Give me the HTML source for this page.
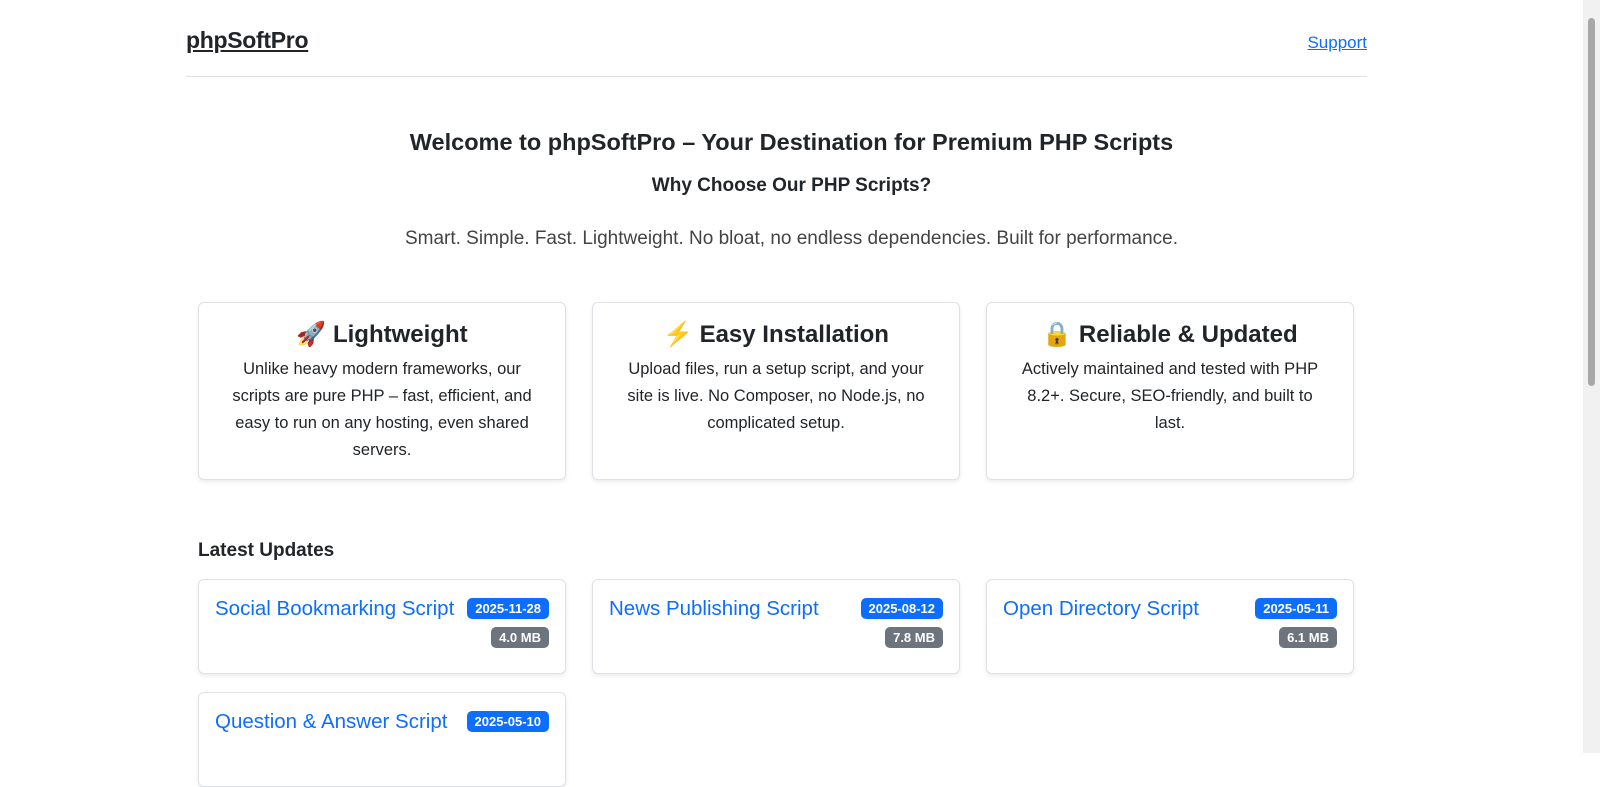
<!DOCTYPE html>
<html><head><meta charset="utf-8"><style>
*{box-sizing:border-box;margin:0;padding:0}
body{width:1600px;height:753px;overflow:hidden;font-family:"Liberation Sans",sans-serif;color:#212529;background:#fff;position:relative}
.sb{position:absolute;right:0;top:0;width:17px;height:753px;background:#f1f1f1}
.sb div{position:absolute;left:5px;top:18px;width:7px;height:368px;background:#a8a8a8;border-radius:4px}
.hdr{position:absolute;left:186px;width:1181px;top:0;height:77px;border-bottom:1px solid #dee2e6}
.logo{position:absolute;left:0;top:27px;font-size:23px;font-weight:bold;color:#212529;text-decoration:underline;letter-spacing:-0.3px}
.sup{position:absolute;right:0;top:33px;font-size:17px;color:#0d6efd;text-decoration:underline}
.c{position:absolute;left:0;width:1583px;text-align:center}
.card{position:absolute;border:1px solid #dee2e6;border-radius:6px;box-shadow:0 2px 4px rgba(0,0,0,.08);background:#fff}
.f{top:302px;width:368px;height:178px;text-align:center;padding:0 28px}
.f h3{font-size:24px;font-weight:600;margin-top:17px;line-height:30px;white-space:nowrap;margin-left:-20px;margin-right:-20px}
.f p{font-size:16.5px;line-height:27px;margin-top:6px}
.u{width:368px;height:95px}
.u a{position:absolute;left:16px;top:17px;font-size:20.5px;color:#0d6efd;text-decoration:none}
.b{position:absolute;right:16px;font-size:13px;font-weight:bold;color:#fff;border-radius:5px;padding:0 8px;line-height:21px;height:21px}
.bd{top:18px;background:#0d6efd}.bs{top:47px;background:#6c757d}
</style></head><body>
<div class="sb"><div></div></div>
<div class="hdr"><span class="logo">phpSoftPro</span><span class="sup">Support</span></div>
<div class="c" style="top:129px;font-size:23.5px;font-weight:600">Welcome to phpSoftPro – Your Destination for Premium PHP Scripts</div>
<div class="c" style="top:175px;font-size:19px;font-weight:600">Why Choose Our PHP Scripts?</div>
<div class="c" style="top:228px;font-size:19px;font-weight:300;color:#444">Smart. Simple. Fast. Lightweight. No bloat, no endless dependencies. Built for performance.</div>
<div class="card f" style="left:198px"><h3>🚀 Lightweight</h3><p>Unlike heavy modern frameworks, our scripts are pure PHP – fast, efficient, and easy to run on any hosting, even shared servers.</p></div>
<div class="card f" style="left:592px"><h3>⚡ Easy Installation</h3><p>Upload files, run a setup script, and your site is live. No Composer, no Node.js, no complicated setup.</p></div>
<div class="card f" style="left:986px"><h3>🔒 Reliable &amp; Updated</h3><p>Actively maintained and tested with PHP 8.2+. Secure, SEO-friendly, and built to last.</p></div>
<div style="position:absolute;left:198px;top:540px;font-size:19px;font-weight:600">Latest Updates</div>
<div class="card u" style="left:198px;top:579px"><a>Social Bookmarking Script</a><span class="b bd">2025-11-28</span><span class="b bs">4.0 MB</span></div>
<div class="card u" style="left:592px;top:579px"><a>News Publishing Script</a><span class="b bd">2025-08-12</span><span class="b bs">7.8 MB</span></div>
<div class="card u" style="left:986px;top:579px"><a>Open Directory Script</a><span class="b bd">2025-05-11</span><span class="b bs">6.1 MB</span></div>
<div class="card u" style="left:198px;top:692px"><a>Question &amp; Answer Script</a><span class="b bd">2025-05-10</span></div>
</body></html>
